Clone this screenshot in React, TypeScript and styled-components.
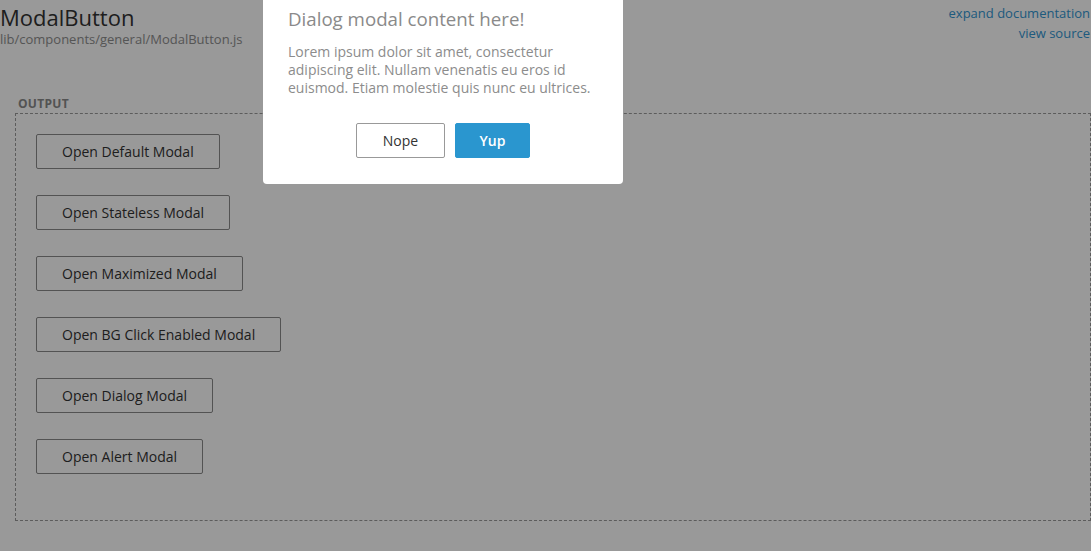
import React from "react";
import styled, { createGlobalStyle } from "styled-components";

const GlobalStyle = createGlobalStyle`
  html, body { margin: 0; padding: 0; background: #fff; }
  body {
    font-family: "Open Sans", "Noto Sans", "Liberation Sans", sans-serif;
    color: #333;
    -webkit-font-smoothing: antialiased;
  }
  * { box-sizing: border-box; }
`;

const Page = styled.div`
  position: relative;
  width: 1091px;
  height: 551px;
  overflow: hidden;
`;

const Header = styled.header`
  display: flex;
  justify-content: space-between;
  align-items: flex-start;
`;

const TitleBlock = styled.div`
  display: flex;
  flex-direction: column;
`;

const Title = styled.h1`
  margin: 0;
  padding-top: 4px;
  font-size: 22px;
  line-height: 26px;
  font-weight: 400;
  color: #333;
`;

const Path = styled.div`
  font-size: 13px;
  line-height: 18px;
  color: #8e8e8e;
`;

const Links = styled.div`
  display: flex;
  flex-direction: column;
  align-items: flex-end;
  padding-top: 3px;
  padding-right: 1px;
`;

const DocLink = styled.a`
  font-size: 13px;
  line-height: 20px;
  color: #3296d2;
  text-decoration: none;
`;

const Section = styled.section`
  padding: 49px 0 0 15px;
`;

const Label = styled.div`
  margin-left: 3px;
  font-size: 12px;
  line-height: 14px;
  font-weight: 700;
  color: #8a8a8a;
  letter-spacing: 0.3px;
`;

const OutputBox = styled.div`
  margin-top: 2px;
  border: 1px dashed #999;
  padding: 20px 20px 20px;
  display: flex;
  flex-direction: column;
  align-items: flex-start;
  gap: 26px;
  height: 408px;
`;

const OpenButton = styled.button`
  height: 35px;
  padding: 0 25px;
  background: #fff;
  border: 1px solid #8a8a8a;
  border-radius: 2px;
  font-family: inherit;
  font-size: 14px;
  color: #333;
  cursor: pointer;
`;

const Overlay = styled.div`
  position: absolute;
  inset: 0;
  background: rgba(0, 0, 0, 0.4);
`;

const Modal = styled.div`
  position: absolute;
  left: 263px;
  top: -10px;
  width: 360px;
  height: 194px;
  background: #fff;
  border-radius: 4px;
  padding: 17px 15px 0 25px;
  display: flex;
  flex-direction: column;
`;

const ModalTitle = styled.h2`
  margin: 0;
  font-size: 18.7px;
  line-height: 24px;
  font-weight: 400;
  color: #8a8a8a;
`;

const ModalBody = styled.p`
  margin: 12px 0 0;
  font-size: 14px;
  line-height: 18px;
  color: #8c8c8c;
`;

const Actions = styled.div`
  display: flex;
  justify-content: center;
  gap: 10px;
  margin-top: 26px;
  margin-right: 10px;
`;

const DialogButton = styled.button<{ $primary?: boolean }>`
  height: 35px;
  width: ${(p) => (p.$primary ? "75px" : "89px")};
  border-radius: 2px;
  font-family: inherit;
  font-size: 14px;
  font-weight: ${(p) => (p.$primary ? 600 : 400)};
  border: 1px solid ${(p) => (p.$primary ? "#2a96cf" : "#999")};
  background: ${(p) => (p.$primary ? "#2a96cf" : "#fff")};
  color: ${(p) => (p.$primary ? "#fff" : "#333")};
  cursor: pointer;
`;

const buttons = [
  "Open Default Modal",
  "Open Stateless Modal",
  "Open Maximized Modal",
  "Open BG Click Enabled Modal",
  "Open Dialog Modal",
  "Open Alert Modal",
];

export default function App() {
  return (
    <Page>
      <GlobalStyle />
      <Header>
        <TitleBlock>
          <Title>ModalButton</Title>
          <Path>lib/components/general/ModalButton.js</Path>
        </TitleBlock>
        <Links>
          <DocLink href="#">expand documentation</DocLink>
          <DocLink href="#">view source</DocLink>
        </Links>
      </Header>
      <Section>
        <Label>OUTPUT</Label>
        <OutputBox>
          {buttons.map((b) => (
            <OpenButton key={b}>{b}</OpenButton>
          ))}
        </OutputBox>
      </Section>
      <Overlay />
      <Modal>
        <ModalTitle>Dialog modal content here!</ModalTitle>
        <ModalBody>
          Lorem ipsum dolor sit amet, consectetur adipiscing elit. Nullam
          venenatis eu eros id euismod. Etiam molestie quis nunc eu ultrices.
        </ModalBody>
        <Actions>
          <DialogButton>Nope</DialogButton>
          <DialogButton $primary>Yup</DialogButton>
        </Actions>
      </Modal>
    </Page>
  );
}
